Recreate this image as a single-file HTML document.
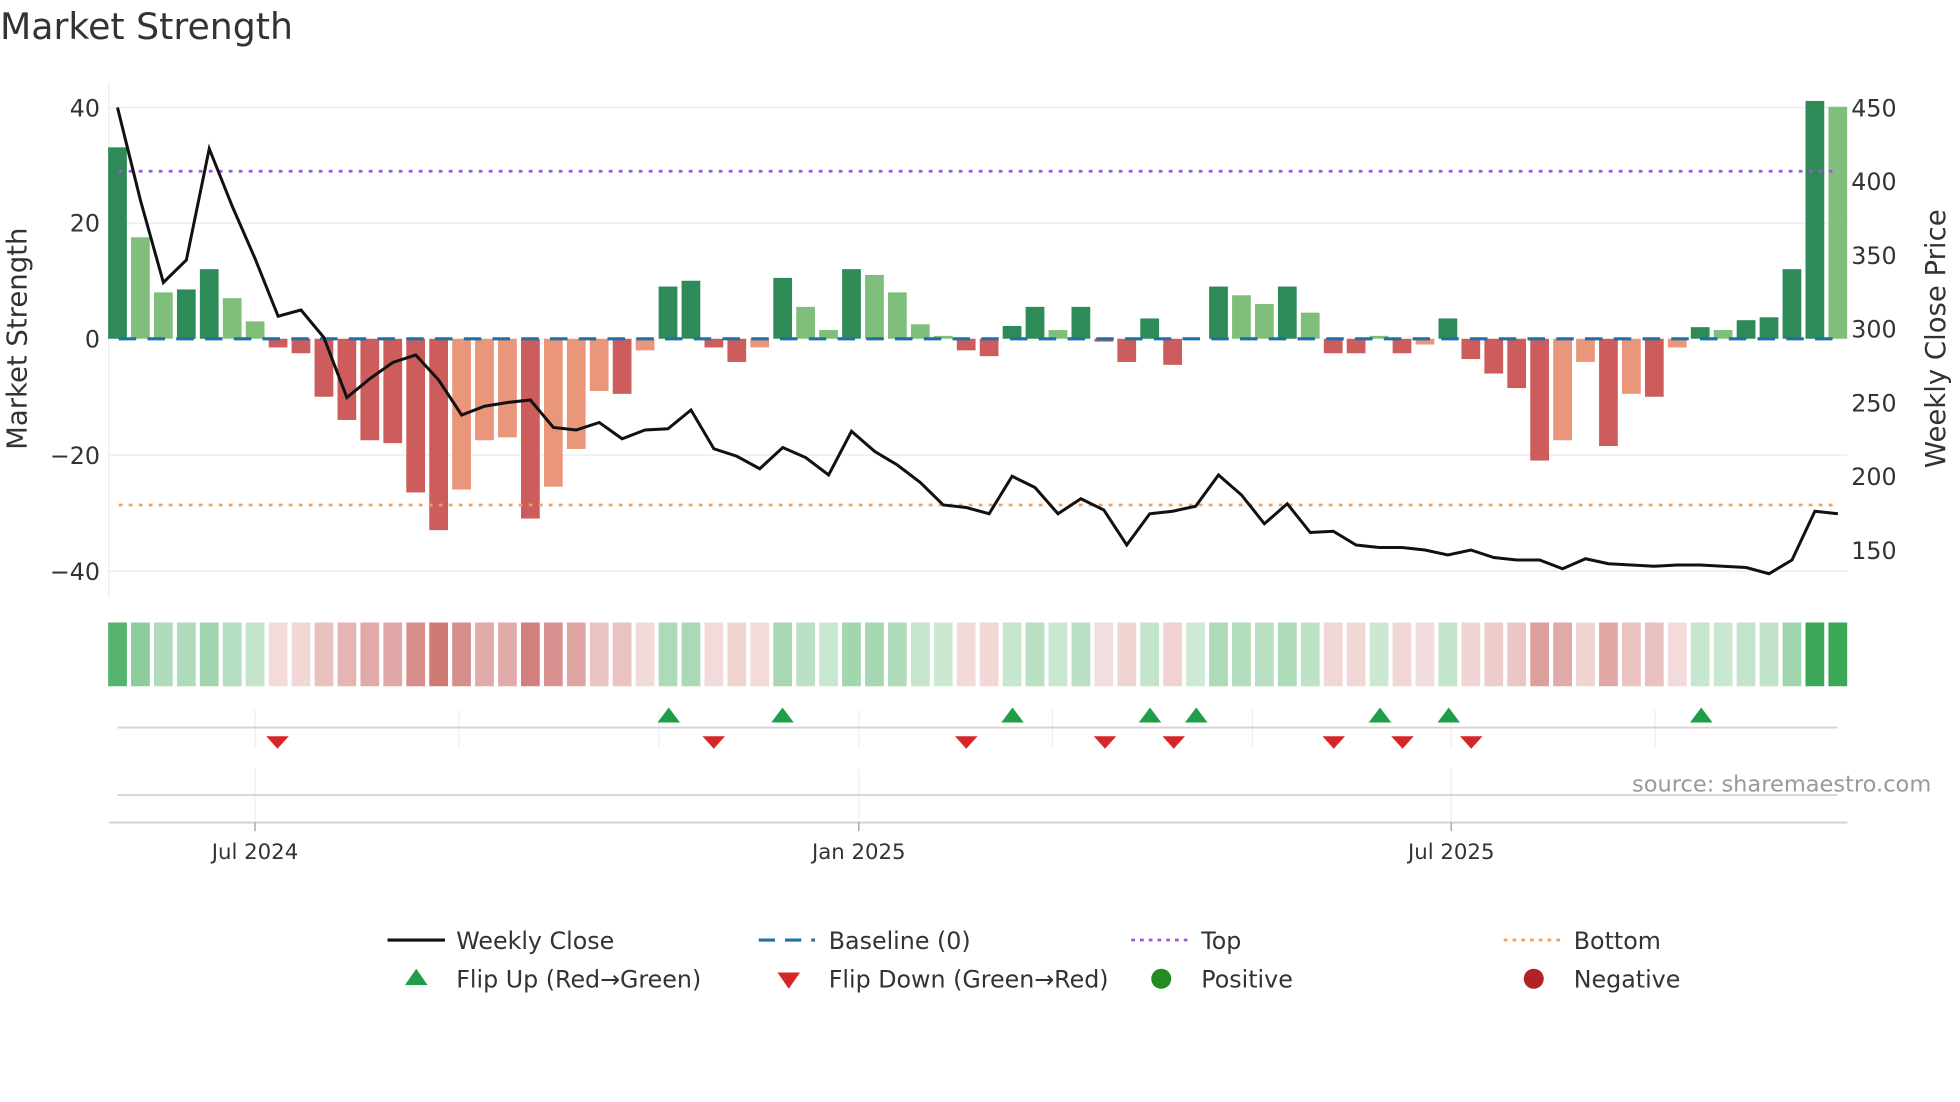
<!DOCTYPE html>
<html><head><meta charset="utf-8">
<style>
html,body{margin:0;padding:0;background:#fff;}
svg{display:block;}
text{font-family:"DejaVu Sans","Liberation Sans",sans-serif;}
</style></head>
<body>
<svg id="s" width="1960" height="1102" viewBox="0 0 1568 881.6" preserveAspectRatio="none" xmlns="http://www.w3.org/2000/svg">
<rect width="1568" height="882" fill="#fff"/>
<text x="0" y="31" font-size="29" fill="#333">Market Strength</text>
<g stroke="#eceef2" stroke-width="1.2">
<line x1="87" y1="86" x2="1478" y2="86"/>
<line x1="87" y1="178.5" x2="1478" y2="178.5"/>
<line x1="87" y1="364" x2="1478" y2="364"/>
<line x1="87" y1="457" x2="1478" y2="457"/>
<line x1="87" y1="66" x2="87" y2="478"/>
</g>
<g font-size="19" fill="#333" text-anchor="end">
<text x="80" y="93">40</text>
<text x="80" y="185">20</text>
<text x="80" y="278">0</text>
<text x="80" y="371">−20</text>
<text x="80" y="464">−40</text>
</g>
<g font-size="19" fill="#333">
<text x="1481" y="93">450</text>
<text x="1481" y="152">400</text>
<text x="1481" y="211">350</text>
<text x="1481" y="270">300</text>
<text x="1481" y="329">250</text>
<text x="1481" y="388">200</text>
<text x="1481" y="447">150</text>
</g>
<text transform="translate(21,271) rotate(-90)" text-anchor="middle" font-size="22" fill="#333">Market Strength</text>
<text transform="translate(1556,271) rotate(-90)" text-anchor="middle" font-size="22" fill="#333">Weekly Close Price</text>
<g id="bars"></g>
<line x1="95" y1="271" x2="1470" y2="271" stroke="#1f6fa8" stroke-width="2.5" stroke-dasharray="14,9"/>
<line x1="95" y1="137" x2="1470" y2="137" stroke="#9b59d9" stroke-width="2.2" stroke-dasharray="3,5"/>
<line x1="95" y1="404" x2="1470" y2="404" stroke="#f0a060" stroke-width="2.2" stroke-dasharray="3,5"/>
<polyline id="close" fill="none" stroke="#111" stroke-width="2.4" stroke-linejoin="miter" points=""/>
<g id="strip"></g>
<g stroke="#eceef2" stroke-width="1">
<line x1="204" y1="568" x2="204" y2="598"/><line x1="367" y1="568" x2="367" y2="598"/>
<line x1="527" y1="568" x2="527" y2="598"/><line x1="687" y1="568" x2="687" y2="598"/>
<line x1="842" y1="568" x2="842" y2="598"/><line x1="1002" y1="568" x2="1002" y2="598"/>
<line x1="1161" y1="568" x2="1161" y2="598"/><line x1="1324" y1="568" x2="1324" y2="598"/>
<line x1="204" y1="615" x2="204" y2="658"/><line x1="687" y1="615" x2="687" y2="658"/>
<line x1="1161" y1="615" x2="1161" y2="658"/>
</g>
<line x1="94" y1="582" x2="1470" y2="582" stroke="#d5d5d5" stroke-width="1.5"/>
<line x1="94" y1="636" x2="1470" y2="636" stroke="#d5d5d5" stroke-width="1.5"/>
<line x1="87" y1="658" x2="1478" y2="658" stroke="#d0d0d0" stroke-width="1.5"/>
<g stroke="#aaa" stroke-width="1.2"><line x1="204" y1="658" x2="204" y2="665"/><line x1="687" y1="658" x2="687" y2="665"/><line x1="1161" y1="658" x2="1161" y2="665"/></g>
<g id="marks"></g>
<text x="1545" y="633" text-anchor="end" font-size="18" fill="#999">source: sharemaestro.com</text>
<g font-size="17" fill="#333" text-anchor="middle">
<text x="204" y="687">Jul 2024</text><text x="687" y="687">Jan 2025</text><text x="1161" y="687">Jul 2025</text>
</g>
<g font-size="19" fill="#333">
<line x1="310" y1="752" x2="356" y2="752" stroke="#111" stroke-width="2.5"/>
<text x="365" y="759">Weekly Close</text>
<line x1="607" y1="752" x2="652" y2="752" stroke="#1f6fa8" stroke-width="2.5" stroke-dasharray="13,8"/>
<text x="663" y="759">Baseline (0)</text>
<line x1="905" y1="752" x2="950" y2="752" stroke="#9b59d9" stroke-width="2.2" stroke-dasharray="3,4"/>
<text x="961" y="759">Top</text>
<line x1="1203" y1="752" x2="1248" y2="752" stroke="#f0a060" stroke-width="2.2" stroke-dasharray="3,4"/>
<text x="1259" y="759">Bottom</text>
<polygon points="324,788 342,788 333,775" fill="#1f9e48"/>
<text x="365" y="790">Flip Up (Red→Green)</text>
<polygon points="622,778 640,778 631,791" fill="#d62728"/>
<text x="663" y="790">Flip Down (Green→Red)</text>
<circle cx="929" cy="783" r="8" fill="#228b22"/>
<text x="961" y="790">Positive</text>
<circle cx="1227" cy="783" r="8" fill="#b22222"/>
<text x="1259" y="790">Negative</text>
</g>
</svg>
<script>
var V=[[33,'D'],[17.5,'L'],[8,'L'],[8.5,'D'],[12,'D'],[7,'L'],[3,'L'],[-1.5,'R'],[-2.5,'R'],[-10,'R'],[-14,'R'],[-17.5,'R'],[-18,'R'],[-26.5,'R'],[-33,'R'],[-26,'S'],[-17.5,'S'],[-17,'S'],[-31,'R'],[-25.5,'S'],[-19,'S'],[-9,'S'],[-9.5,'R'],[-2,'S'],[9,'D'],[10,'D'],[-1.5,'R'],[-4,'R'],[-1.5,'S'],[10.5,'D'],[5.5,'L'],[1.5,'L'],[12,'D'],[11,'L'],[8,'L'],[2.5,'L'],[0.5,'L'],[-2,'R'],[-3,'R'],[2.2,'D'],[5.5,'D'],[1.5,'L'],[5.5,'D'],[-0.5,'R'],[-4,'R'],[3.5,'D'],[-4.5,'R'],[0,'L'],[9,'D'],[7.5,'L'],[6,'L'],[9,'D'],[4.5,'L'],[-2.5,'R'],[-2.5,'R'],[0.5,'L'],[-2.5,'R'],[-1,'S'],[3.5,'D'],[-3.5,'R'],[-6,'R'],[-8.5,'R'],[-21,'R'],[-17.5,'S'],[-4,'S'],[-18.5,'R'],[-9.5,'S'],[-10,'R'],[-1.5,'S'],[2,'D'],[1.5,'L'],[3.2,'D'],[3.7,'D'],[12,'D'],[41,'D'],[40,'L']];
var C={D:'#2e8b57',L:'#7fbf7b',R:'#cd5c5c',S:'#e9967a'};
var Y=[86,160,226,208,119,165,207,253,248,270,318,303,290,284,304,332,325,322,320,342,344,338,351,344,343,328,359,365,375,358,366,380,345,361,372,386,404,406,411,381,390,411,399,408,436,411,409,405,380,396,419,403,426,425,436,438,438,440,444,440,446,448,448,455,447,451,452,453,452,452,453,454,459,448,409,411];
var ns='http://www.w3.org/2000/svg',b=document.getElementById('bars'),st=document.getElementById('strip'),pts=[];
function mix(a,c,t){return 'rgb('+[0,1,2].map(function(i){return Math.round(255+(c[i]-255)*t)}).join(',')+')';}
for(var i=0;i<V.length;i++){var x=94+i*18.35,v=V[i][0];
 if(v!==0){var r=document.createElementNS(ns,'rect');var y0=271,y1=271-v*4.64;
 r.setAttribute('x',x-7.5);r.setAttribute('width',15);r.setAttribute('y',Math.min(y0,y1));r.setAttribute('height',Math.abs(y1-y0));r.setAttribute('fill',C[V[i][1]]);b.appendChild(r);}
 var s=document.createElementNS(ns,'rect');s.setAttribute('x',x-7.5);s.setAttribute('width',15);s.setAttribute('y',498);s.setAttribute('height',51);
 var t=Math.min(Math.abs(v)/40,1);var col=v>=0?mix(0,[58,168,86],0.25+0.75*t):mix(0,[200,100,96],0.2+0.8*t);
 s.setAttribute('fill',col);st.appendChild(s);
 if(i<Y.length)pts.push(x.toFixed(1)+','+Y[i]);}
document.getElementById('close').setAttribute('points',pts.join(' '));
var m=document.getElementById('marks'),h='';
[535,626,810,920,957,1104,1159,1361].forEach(function(x){h+='<polygon points="'+(x-9)+',578 '+(x+9)+',578 '+x+',566" fill="#1f9e48"/>';});
[222,571,773,884,939,1067,1122,1177].forEach(function(x){h+='<polygon points="'+(x-9)+',589 '+(x+9)+',589 '+x+',599" fill="#d62728"/>';});
m.innerHTML=h;
</script>
</body></html>
